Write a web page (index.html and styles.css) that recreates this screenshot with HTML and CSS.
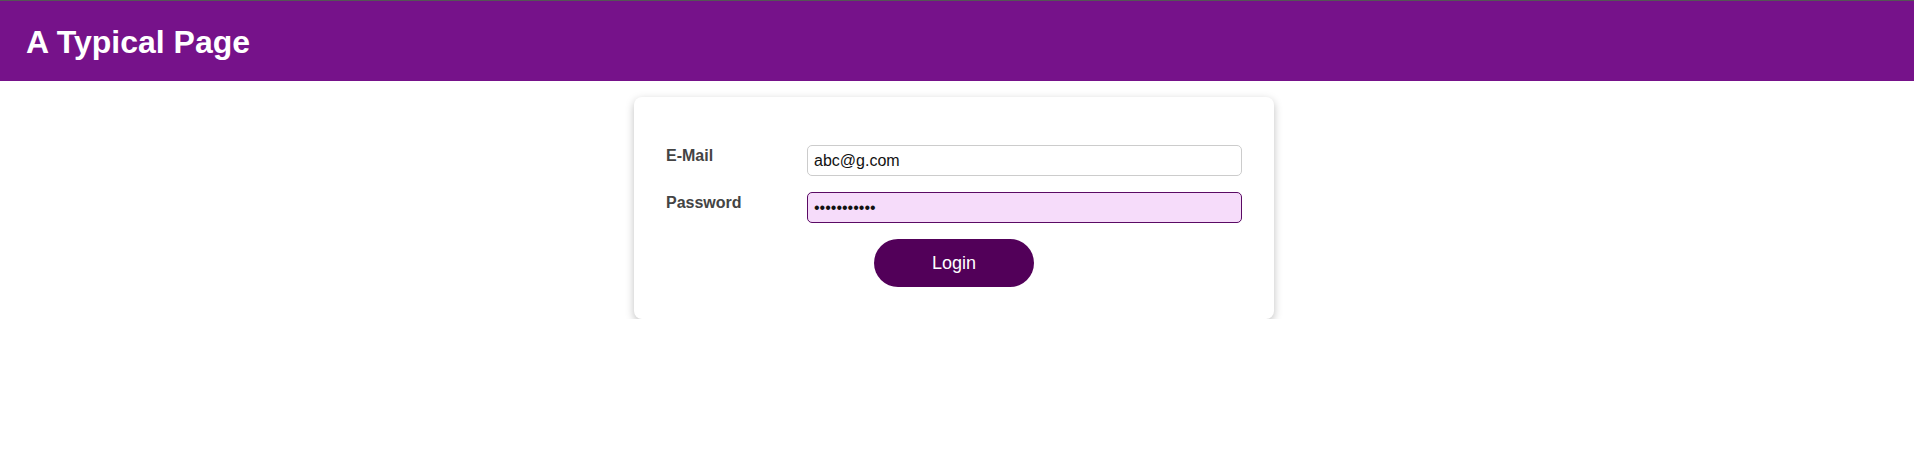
FILE: index.html
```html
<!DOCTYPE html>
<html lang="en">
<head>
<meta charset="utf-8">
<title>A Typical Page</title>
<link rel="stylesheet" href="styles.css">
</head>
<body>
<header class="top-bar">
  <h1 class="title">A Typical Page</h1>
</header>
<main class="main">
  <form class="card">
    <div class="row">
      <label class="label" for="email">E-Mail</label>
      <input class="field" id="email" type="text" value="abc@g.com">
    </div>
    <div class="row">
      <label class="label" for="pw">Password</label>
      <input class="field field-active" id="pw" type="password" value="abcdefghijk">
    </div>
    <div class="actions">
      <button class="btn" type="button">Login</button>
    </div>
  </form>
</main>
</body>
</html>
```
FILE: styles.css
```css
* { box-sizing: border-box; }
html, body { margin: 0; padding: 0; background: #fff; }
body { font-family: "Liberation Sans", Arial, sans-serif; }

.top-bar {
  height: 81px;
  background: #76128a;
  border-top: 1px solid #555;
  display: flex;
  align-items: center;
  padding: 0 26px;
}
.title {
  margin: 0;
  color: #fff;
  font-size: 32px;
  font-weight: bold;
  line-height: 1;
  padding-top: 1px;
}

.main {
  display: flex;
  justify-content: center;
  padding: 16px 6px 0 0;
}

.card {
  width: 640px;
  background: #fff;
  border-radius: 8px;
  box-shadow: 0 3px 8px rgba(0, 0, 0, 0.25);
  padding: 48px 32px 32px;
  display: flex;
  flex-direction: column;
  gap: 16px;
}

.row {
  display: flex;
  align-items: flex-start;
}
.label {
  width: 141px;
  flex: none;
  font-size: 16px;
  font-weight: bold;
  color: #444;
  line-height: 18px;
  padding-top: 2px;
}
.field {
  flex: 1;
  height: 31px;
  border: 1px solid #cccccc;
  border-radius: 5px;
  padding: 0 6px;
  font-family: "Liberation Sans", Arial, sans-serif;
  font-size: 16px;
  color: #111;
  background: #fff;
  outline: none;
}
.field-active {
  background: #f6dcfa;
  border-color: #5a0a64;
}

.actions {
  display: flex;
  justify-content: center;
}
.btn {
  width: 160px;
  height: 48px;
  border: none;
  border-radius: 24px;
  background: #520059;
  color: #fff;
  font-family: "Liberation Sans", Arial, sans-serif;
  font-size: 18px;
  cursor: pointer;
}
```
